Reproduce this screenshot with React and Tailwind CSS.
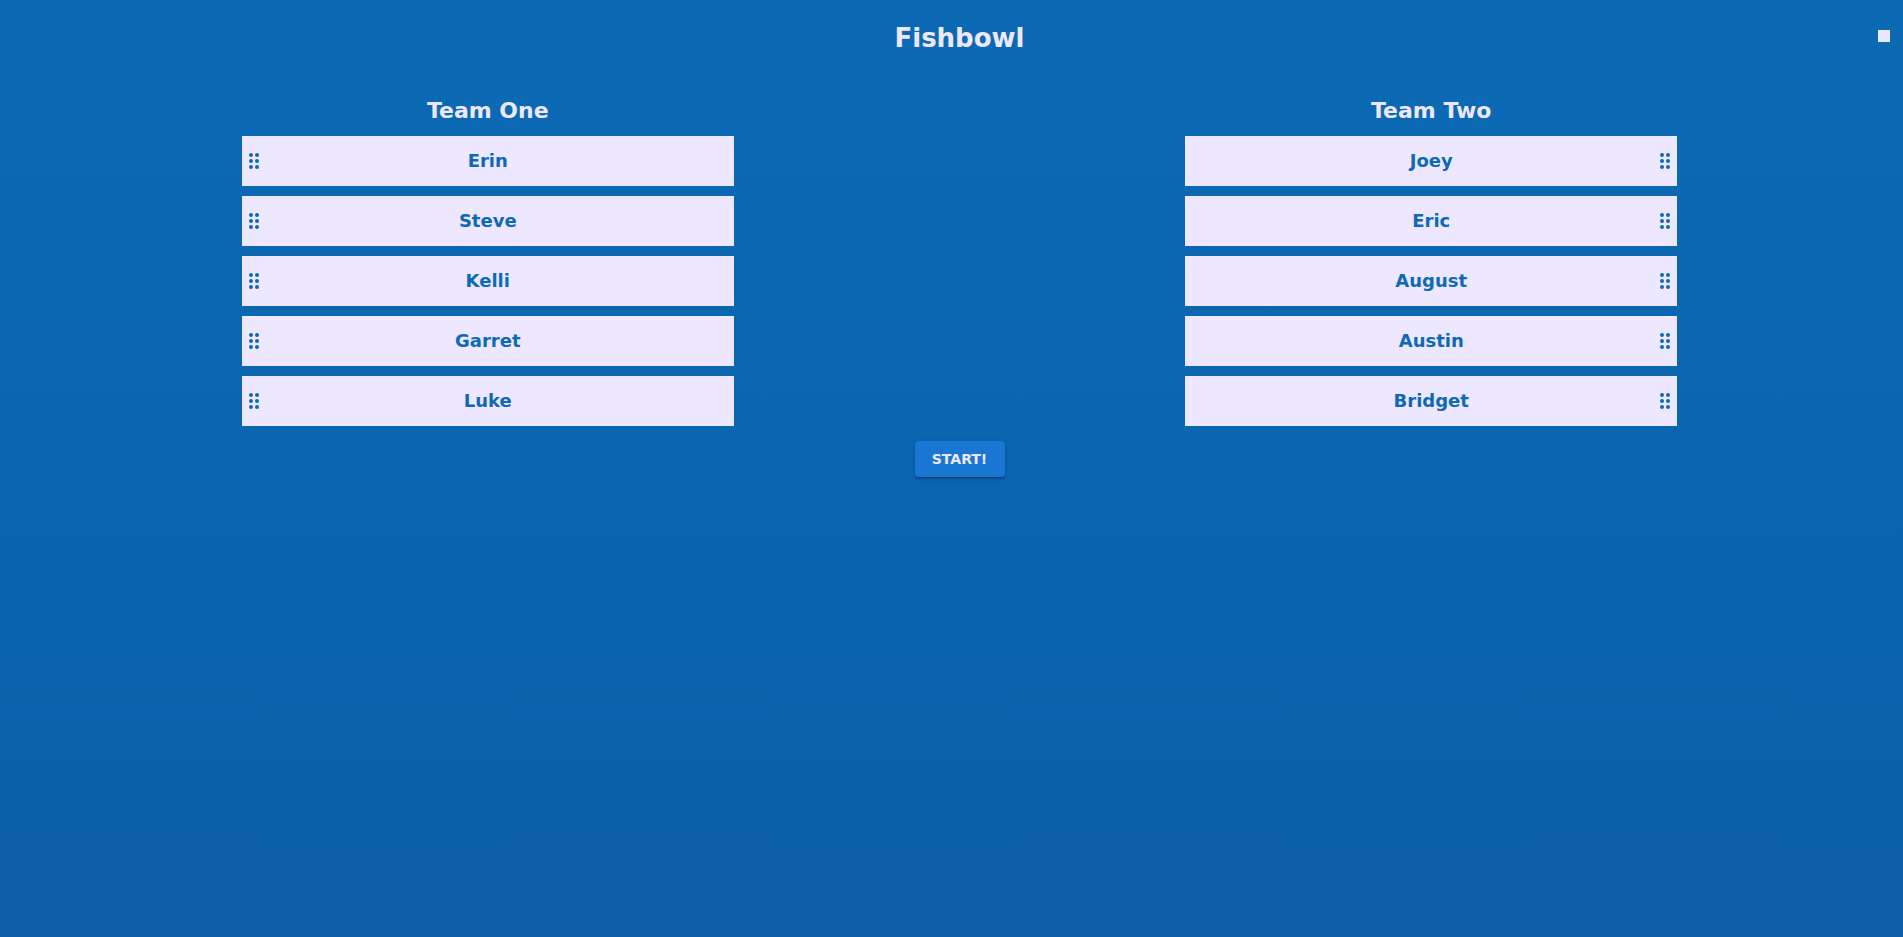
const teams = [
  { name: "Team One", players: ["Erin", "Steve", "Kelli", "Garret", "Luke"], handle: "left" },
  { name: "Team Two", players: ["Joey", "Eric", "August", "Austin", "Bridget"], handle: "right" },
];

function DragHandle({ player, className }) {
  return (
    <button type="button" aria-label={`Move ${player}`} className={`row-start-1 size-6 cursor-grab ${className}`}>
      <svg viewBox="0 0 24 24" className="size-6 fill-current" aria-hidden="true">
        <circle cx="9" cy="6" r="2" />
        <circle cx="15" cy="6" r="2" />
        <circle cx="9" cy="12" r="2" />
        <circle cx="15" cy="12" r="2" />
        <circle cx="9" cy="18" r="2" />
        <circle cx="15" cy="18" r="2" />
      </svg>
    </button>
  );
}

function Team({ team }) {
  return (
    <section className="flex flex-col items-center">
      <h2 className="pb-2 text-[22px] leading-[34px] font-bold">{team.name}</h2>
      <ul className="flex w-[calc(50%+20px)] flex-col gap-[10px]">
        {team.players.map((player) => (
          <li
            key={player}
            className="grid h-[50px] grid-cols-[24px_1fr_24px] items-center bg-[#ede7ff] text-[#0d6ab6]"
          >
            <DragHandle player={player} className={team.handle === "left" ? "col-start-1" : "col-start-3"} />
            <span className="col-start-2 row-start-1 text-center text-lg font-bold">{player}</span>
          </li>
        ))}
      </ul>
    </section>
  );
}

export default function App() {
  return (
    <div className="min-h-screen bg-linear-to-b from-[#0c6ab5] to-[#0b5fa8] font-['DejaVu_Sans',sans-serif] text-[#ede7ff]">
      <header className="grid grid-cols-[1fr_auto_1fr] items-start pt-4 pl-4">
        <h1 className="col-start-2 text-[26px] leading-[44px] font-bold">Fishbowl</h1>
        <button type="button" aria-label="Stop" className="mt-2 mr-[7px] size-6 justify-self-end">
          <svg viewBox="0 0 24 24" className="size-6 fill-current" aria-hidden="true">
            <path d="M6 6h12v12H6z" />
          </svg>
        </button>
      </header>
      <main className="pt-[34px] pl-4">
        <div className="grid grid-cols-2">
          {teams.map((team) => (
            <Team key={team.name} team={team} />
          ))}
        </div>
        <div className="flex justify-center pt-[15px]">
          <button
            type="button"
            className="h-9 min-w-[90px] rounded bg-[#1976d2] px-4 text-sm font-bold shadow-[0_3px_1px_-2px_rgba(0,0,0,0.2),0_2px_2px_0_rgba(0,0,0,0.14),0_1px_5px_0_rgba(0,0,0,0.12)]"
          >
            START!
          </button>
        </div>
      </main>
    </div>
  );
}
